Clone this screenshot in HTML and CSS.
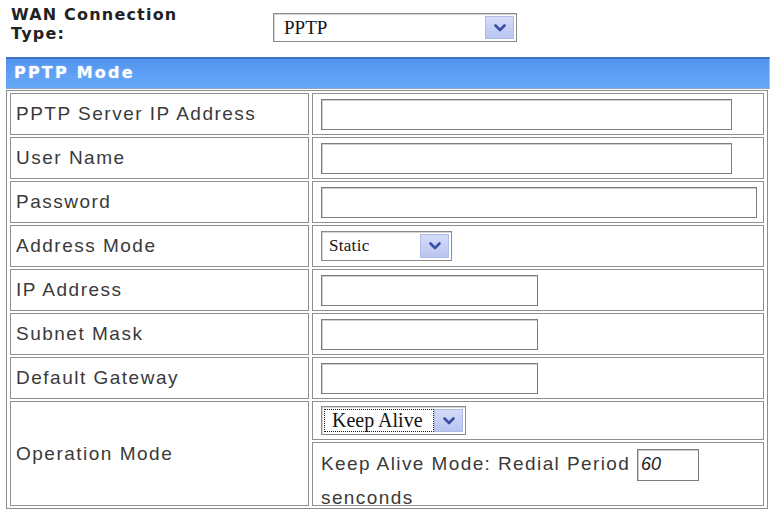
FILE: index.html
```html
<!DOCTYPE html>
<html>
<head>
<meta charset="utf-8">
<link rel="stylesheet" href="styles.css">
</head>
<body>
<div class="page">
  <div class="wan-row">
    <div class="wan-label">WAN Connection<br>Type:</div>
    <div class="select select-wan">
      <span class="select-value">PPTP</span>
      <span class="select-btn"><svg width="14" height="10" viewBox="0 0 14 10"><path d="M2.5 2.5 L7 7 L11.5 2.5" fill="none" stroke="#3b4ea6" stroke-width="2.6" stroke-linecap="round" stroke-linejoin="round"/></svg></span>
    </div>
  </div>
  <div class="section-bar">PPTP Mode</div>
  <table class="form-table">
    <tr>
      <td class="label">PPTP Server IP Address</td>
      <td class="value"><input class="field w-long" type="text"></td>
    </tr>
    <tr>
      <td class="label">User Name</td>
      <td class="value"><input class="field w-long" type="text"></td>
    </tr>
    <tr>
      <td class="label">Password</td>
      <td class="value"><input class="field w-pass" type="password"></td>
    </tr>
    <tr>
      <td class="label">Address Mode</td>
      <td class="value">
        <div class="select select-addr">
          <span class="select-value small">Static</span>
          <span class="select-btn"><svg width="14" height="10" viewBox="0 0 14 10"><path d="M2.5 2.5 L7 7 L11.5 2.5" fill="none" stroke="#3b4ea6" stroke-width="2.6" stroke-linecap="round" stroke-linejoin="round"/></svg></span>
        </div>
      </td>
    </tr>
    <tr>
      <td class="label">IP Address</td>
      <td class="value"><input class="field w-short" type="text"></td>
    </tr>
    <tr>
      <td class="label">Subnet Mask</td>
      <td class="value"><input class="field w-short" type="text"></td>
    </tr>
    <tr>
      <td class="label">Default Gateway</td>
      <td class="value"><input class="field w-short" type="text"></td>
    </tr>
    <tr>
      <td class="label" rowspan="2">Operation Mode</td>
      <td class="value op-top">
        <div class="select select-op">
          <span class="select-value focus">Keep Alive</span>
          <span class="select-btn"><svg width="14" height="10" viewBox="0 0 14 10"><path d="M2.5 2.5 L7 7 L11.5 2.5" fill="none" stroke="#3b4ea6" stroke-width="2.6" stroke-linecap="round" stroke-linejoin="round"/></svg></span>
        </div>
      </td>
    </tr>
    <tr>
      <td class="value op-bottom">
        <div class="op-text">Keep Alive Mode: Redial Period <input class="field w-period" type="text" value="60"><br>senconds</div>
      </td>
    </tr>
  </table>
</div>
</body>
</html>
```

FILE: styles.css
```css
html, body {
  margin: 0;
  padding: 0;
  background: #ffffff;
}

body {
  font-family: "Liberation Sans", Arial, sans-serif;
  color: #3a3a3a;
}

.page {
  width: 773px;
}

.wan-row {
  display: flex;
  align-items: flex-start;
  height: 57px;
  box-sizing: border-box;
  padding: 5px 0 0 11px;
}

.wan-label {
  width: 262px;
  font-family: "DejaVu Sans", Verdana, sans-serif;
  font-weight: bold;
  font-size: 16px;
  letter-spacing: 1.2px;
  line-height: 19px;
  color: #222222;
}

.select {
  display: flex;
  box-sizing: border-box;
  border: 1px solid #8a8a8a;
  box-shadow: inset 1px 1px 0 #d6d6d6;
  background: #ffffff;
  padding: 2px;
}

.select-value {
  flex: 1;
  font-family: "Liberation Serif", "Times New Roman", serif;
  font-size: 19px;
  color: #141414;
  padding-left: 8px;
  line-height: 23px;
}

.select-value.small {
  font-size: 17px;
  padding-left: 5px;
  letter-spacing: 0.3px;
}

.select-value.focus {
  flex: none;
  width: 110px;
  box-sizing: border-box;
  padding-left: 8px;
  outline: 1px dotted #1a1a1a;
  outline-offset: -1px;
  font-size: 20px;
}

.select-btn {
  width: 29px;
  display: flex;
  align-items: center;
  justify-content: center;
  box-sizing: border-box;
  background: linear-gradient(#d5dcf8, #b9c5f1);
  border: 1px solid #aebae8;
}

.select-wan {
  margin-top: 8px;
  width: 244px;
  height: 29px;
}

.select-addr {
  width: 131px;
  height: 30px;
}

.select-op {
  width: 145px;
  height: 29px;
}

.section-bar {
  margin-left: 6px;
  width: 764px;
  height: 32px;
  box-sizing: border-box;
  background: linear-gradient(#5294ee, #5fa2f6 60%, #64a6f8);
  border-top: 2px solid #3f71c4;
  border-bottom: 1px solid #8fa6c8;
  border-right: 1px solid #b8b8e8;
  color: #ffffff;
  font-family: "DejaVu Sans", Verdana, sans-serif;
  font-weight: bold;
  font-size: 16px;
  letter-spacing: 2.2px;
  line-height: 28px;
  padding-left: 8px;
  text-shadow: 0 0 2px #a8c8ff;
}

.form-table {
  margin: 1px 0 0 6px;
  width: 762px;
  border-collapse: separate;
  border-spacing: 3px 2px;
  border: 1px solid #8c8c8c;
}

.form-table td {
  border: 1px solid #8f8f8f;
  padding: 0;
  height: 40px;
  vertical-align: middle;
}

.form-table td.label {
  width: 292px;
  padding-left: 5px;
  font-size: 19px;
  letter-spacing: 1.5px;
  color: #3a3a3a;
}

.form-table td.value {
  padding-left: 8px;
}

.form-table td.op-top {
  height: 37px;
}

.form-table td.op-bottom {
  height: 62px;
  vertical-align: top;
}

.op-text {
  height: 62px;
  box-sizing: border-box;
  padding-top: 4px;
  font-size: 19px;
  letter-spacing: 1.4px;
  line-height: 34px;
  color: #3a3a3a;
}

.field {
  display: block;
  box-sizing: border-box;
  height: 31px;
  margin: 0;
  padding: 0 4px;
  border: 1px solid #7c7c7c;
  box-shadow: inset 1px 1px 0 #cfcfcf;
  background: #ffffff;
  font-family: "Liberation Sans", Arial, sans-serif;
  font-size: 18px;
  color: #222222;
}

.w-long { width: 411px; }
.w-pass { width: 436px; }
.w-short { width: 217px; }

.w-period {
  display: inline-block;
  vertical-align: middle;
  width: 62px;
  height: 32px;
  font-style: italic;
  letter-spacing: 0;
  padding-left: 3px;
}
```
